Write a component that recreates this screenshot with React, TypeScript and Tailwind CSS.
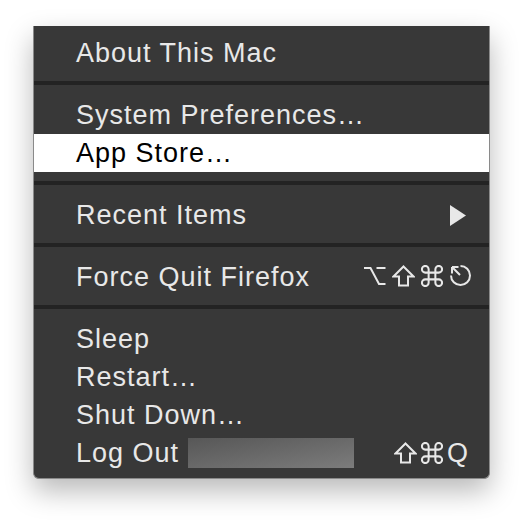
import type { ReactNode } from "react";

const font = { fontFamily: '"Liberation Sans", Arial, sans-serif' };
const ink = "#e8e8e8";

function Row({
  label,
  active,
  right,
  children,
}: {
  label: string;
  active?: boolean;
  right?: ReactNode;
  children?: ReactNode;
}) {
  return (
    <div
      className={
        "flex h-[38px] items-center pl-[42px] pr-[21px] " +
        (active ? "bg-white text-black" : "text-[#e8e8e8]")
      }
    >
      <span className="text-[27px] leading-none tracking-[1px]">{label}</span>
      {children}
      <div className="ml-auto flex items-center">{right}</div>
    </div>
  );
}

function Separator() {
  return (
    <div className="pt-[9px] pb-[11px]">
      <div className="h-[4px] bg-[#232323]" />
    </div>
  );
}

function OptionIcon() {
  return (
    <svg width="23" height="22" viewBox="0 0 23 22" fill="none" stroke={ink} strokeWidth="2">
      <path d="M1 3 H7.5 L16 19 H22.5 M13.5 3 H22.5" />
    </svg>
  );
}

function ShiftIcon() {
  return (
    <svg width="23" height="22" viewBox="0 0 23 22" fill="none" stroke={ink} strokeWidth="2">
      <path d="M11.5 1.5 L21.5 11.5 L16 11.5 L16 20.5 L7 20.5 L7 11.5 L1.5 11.5 Z" />
    </svg>
  );
}

function CommandIcon() {
  return (
    <svg width="22" height="22" viewBox="2.2 2.2 19.6 19.6" fill="none" stroke={ink} strokeWidth="1.8">
      <path d="M15 6v12a3 3 0 1 0 3-3H6a3 3 0 1 0 3 3V6a3 3 0 1 0-3 3h12a3 3 0 1 0-3-3" />
    </svg>
  );
}

function EscIcon() {
  return (
    <svg width="23" height="23" viewBox="0 0 23 23" fill="none" stroke={ink} strokeWidth="2">
      <path d="M11.5 2 A9.5 9.5 0 1 1 2 11.5" />
      <path d="M3 3 L11 11 M3 3 L3 9.5 M3 3 L9.5 3" />
    </svg>
  );
}

export default function App() {
  return (
    <div className="h-[522px] w-[526px] bg-white pl-[33px] pt-[26px]" style={font}>
      <div className="w-[457px] rounded-b-[6px] border-x border-b border-[#8a8a8a] bg-[#383838] pt-[8px] pb-[6px] shadow-[0_12px_28px_rgba(0,0,0,0.28)]">
        <Row label="About This Mac" />
        <Separator />
        <Row label="System Preferences…" />
        <Row label="App Store…" active />
        <Separator />
        <Row
          label="Recent Items"
          right={
            <svg width="16" height="21" viewBox="0 0 16 21" className="mr-[2px]">
              <path d="M0 0 L16 10.5 L0 21 Z" fill={ink} />
            </svg>
          }
        />
        <Separator />
        <Row
          label="Force Quit Firefox"
          right={
            <div className="-mr-[4px] mt-[-3px] flex items-center gap-[6px]">
              <OptionIcon />
              <ShiftIcon />
              <CommandIcon />
              <EscIcon />
            </div>
          }
        />
        <Separator />
        <Row label="Sleep" />
        <Row label="Restart…" />
        <Row label="Shut Down…" />
        <Row
          label="Log Out"
          right={
            <div className="flex items-center gap-[4px]">
              <ShiftIcon />
              <CommandIcon />
              <span className="text-[27px] leading-none">Q</span>
            </div>
          }
        >
          <div className="ml-[9px] h-[30px] w-[166px] bg-gradient-to-br from-[#575757] to-[#7c7c7c]" />
        </Row>
      </div>
    </div>
  );
}
